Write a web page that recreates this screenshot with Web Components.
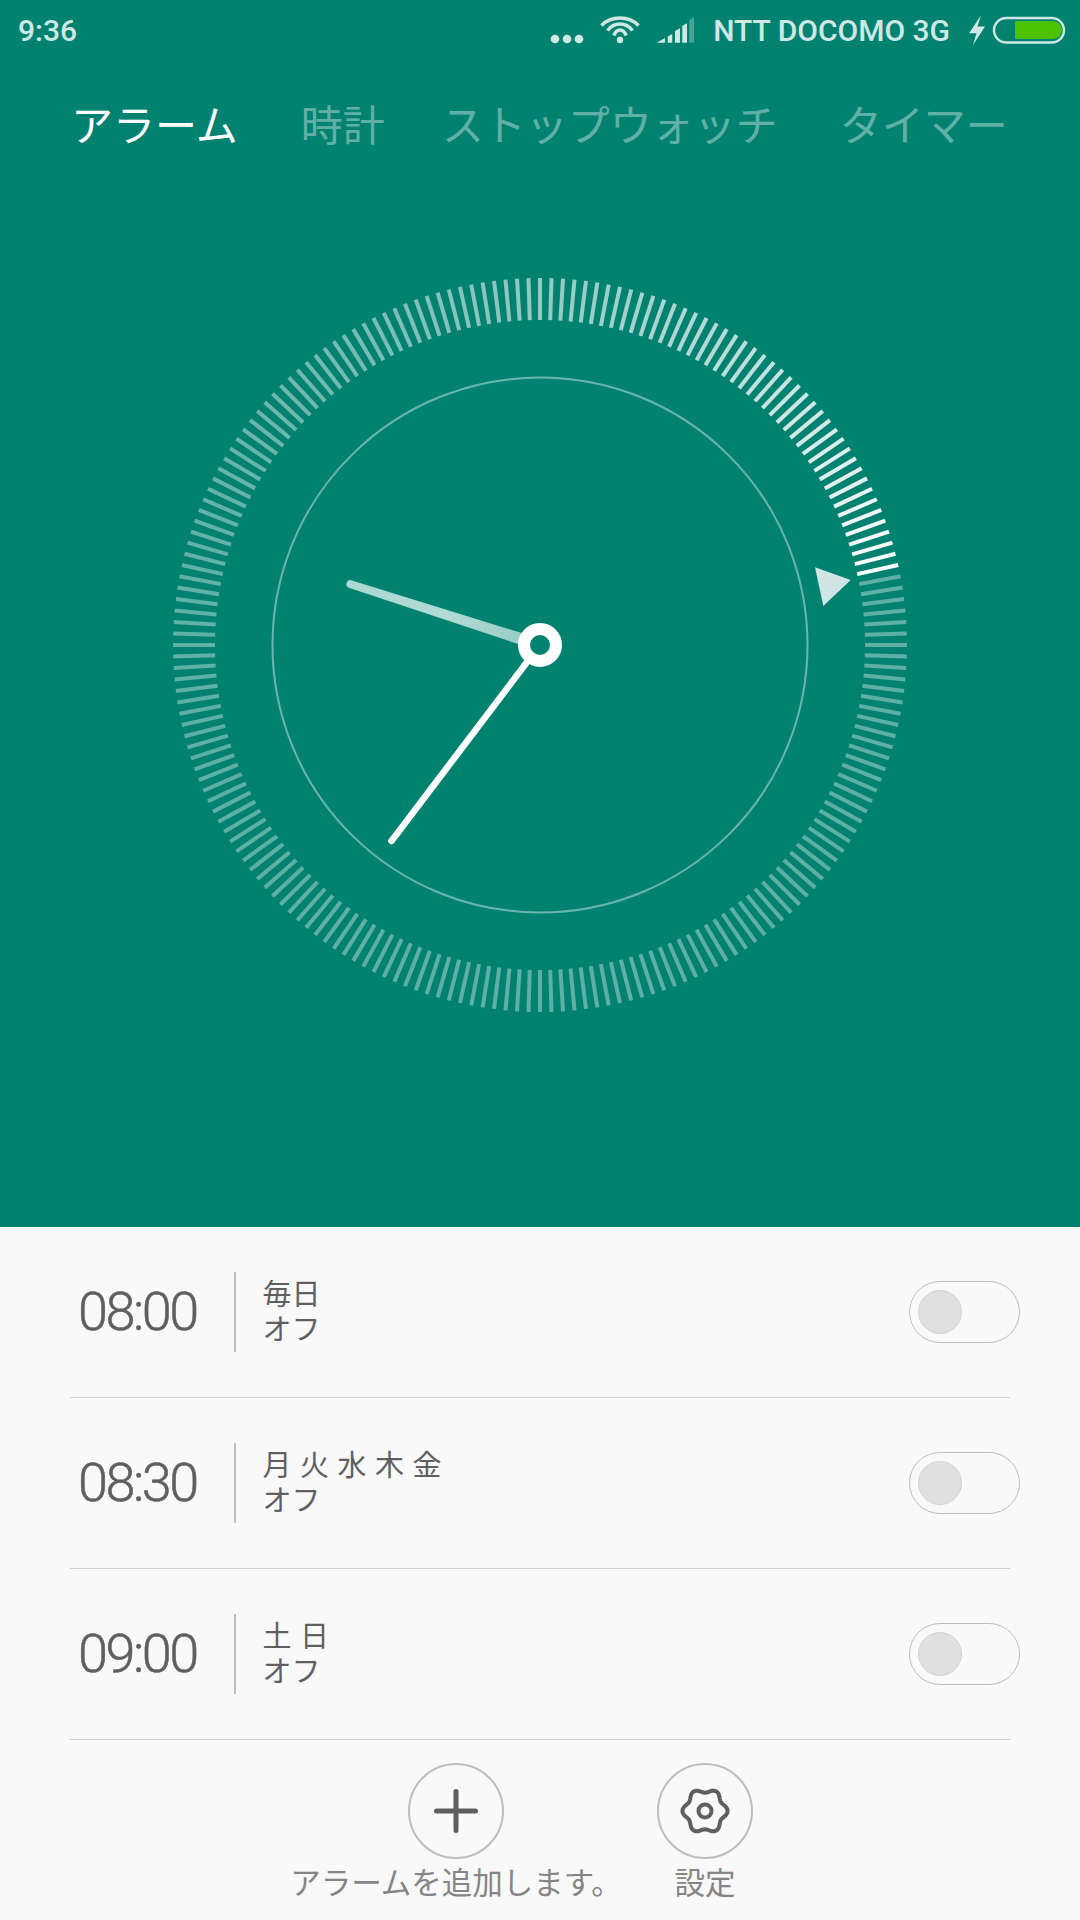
<!DOCTYPE html>
<html lang="ja">
<head>
<meta charset="utf-8">
<title>アラーム</title>
<style>
    html, body {
        margin: 0;
        padding: 0;
        background: #f9f9f9;
    }
    body {
        width: 1080px;
        height: 1920px;
        overflow: hidden;
        font-family: "Noto Sans CJK JP", "Roboto", sans-serif;
    }
</style>
</head>
<body>
<clock-app>
    <status-bar slot="status" time="9:36" carrier="NTT DOCOMO 3G"></status-bar>
    <tab-item slot="tabs" active>アラーム</tab-item>
    <tab-item slot="tabs" style="margin-left:63px">時計</tab-item>
    <tab-item slot="tabs" style="margin-left:57px">ストップウォッチ</tab-item>
    <tab-item slot="tabs" style="margin-left:62px">タイマー</tab-item>
    <clock-dial slot="dial"></clock-dial>

    <alarm-row slot="list" time="08:00" days="毎日" state="オフ"></alarm-row>
    <alarm-row slot="list" time="08:30" days="月 火 水 木 金" state="オフ"></alarm-row>
    <alarm-row slot="list" time="09:00" days="土 日" state="オフ"></alarm-row>

    <action-button slot="actions" icon="plus">アラームを追加します。</action-button>
    <action-button slot="actions" icon="gear">設定</action-button>
</clock-app>

<script>
class ClockApp extends HTMLElement {
    constructor() {
        super();
        this.attachShadow({ mode: "open" });
        this.shadowRoot.innerHTML = `
            <style>
                :host {
                    display: flex;
                    flex-direction: column;
                    width: 1080px;
                    height: 1920px;
                }
                .top {
                    height: 1227px;
                    background: #018271;
                    display: flex;
                    flex-direction: column;
                }
                .tabs {
                    display: flex;
                    padding: 35px 0 0 71px;
                }
                .dial {
                    display: flex;
                    justify-content: center;
                    margin-top: 114px;
                }
                .list {
                    display: flex;
                    flex-direction: column;
                }
                .actions {
                    display: flex;
                    justify-content: center;
                    align-items: flex-start;
                    padding: 23px 0 0 81px;
                }
            </style>
            <div class="top">
                <slot name="status"></slot>
                <div class="tabs"><slot name="tabs"></slot></div>
                <div class="dial"><slot name="dial"></slot></div>
            </div>
            <div class="list"><slot name="list"></slot></div>
            <div class="actions"><slot name="actions"></slot></div>
        `;
    }
}

class StatusBar extends HTMLElement {
    constructor() {
        super();
        this.attachShadow({ mode: "open" });
        this.shadowRoot.innerHTML = `
            <style>
                :host {
                    display: flex;
                    align-items: center;
                    height: 60px;
                    padding-left: 18px;
                    color: #d0e8e4;
                    font: 500 30px "Roboto", sans-serif;
                }
                .time { flex: 1; }
                .carrier { margin-left: 13px; white-space: nowrap; }
                svg { display: block; flex: none; }
                .power { margin-left: 10px; }
            </style>
            <span class="time"></span>
            <svg width="150" height="60" viewBox="550 0 150 60" fill="#d0e8e4">
                <circle cx="555" cy="39" r="4.300"/>
                <circle cx="567" cy="39" r="4.300"/>
                <circle cx="579" cy="39" r="4.300"/>
                <g fill="none" stroke="#d0e8e4" stroke-width="3.400">
                    <path d="M601.500 25.500C611 15.500 629 15.500 638.500 25.500"/>
                    <path d="M607.500 30.500C614 21.800 626 21.800 632.500 30.500"/>
                    <path d="M613.800 35.500C617 28.200 623 28.200 626.200 35.500"/>
                </g>
                <circle cx="620" cy="40" r="3.200"/>
                <path d="M656.700 42.700l8.300-4.700v4.700z"/>
                <path d="M667.700 36.500l4.500-2.500v8.700h-4.500z"/>
                <path d="M675 31l5-2.700v14.400h-5z"/>
                <path d="M682.300 26l4.700-2.700v19.400h-4.700z"/>
                <path d="M689.300 20l4.700-2.700v25.400h-4.700z" opacity=".35"/>
            </svg>
            <span class="carrier"></span>
            <svg class="power" width="120" height="60" viewBox="960 0 120 60">
                <path d="M981 15.300L969 33.300H976.500L973 45L985 26.500H977.500z" fill="#d0e8e4"/>
                <rect x="994" y="18" width="70" height="24.500" rx="12.250" fill="none" stroke="#d0e8e4" stroke-width="2.400"/>
                <path d="M1015 21h38a9 9 0 0 1 0 18h-38z" fill="#4cc200"/>
            </svg>
        `;
    }

    connectedCallback() {
        this.shadowRoot.querySelector(".time").textContent = this.getAttribute("time");
        this.shadowRoot.querySelector(".carrier").textContent = this.getAttribute("carrier");
    }
}

class TabItem extends HTMLElement {
    constructor() {
        super();
        this.attachShadow({ mode: "open" });
        this.shadowRoot.innerHTML = `
            <style>
                :host {
                    display: block;
                    color: rgba(255, 255, 255, .4);
                    font: 400 42px/56px "Noto Sans CJK JP", sans-serif;
                    white-space: nowrap;
                }
                :host([active]) { color: #fff; }
            </style>
            <slot></slot>
        `;
    }
}

class ClockDial extends HTMLElement {
    constructor() {
        super();
        this.attachShadow({ mode: "open" });

        // 200 ticks, the bright end sits at tick 43 and fades back round the ring
        let ticks = "";
        for (let i = 0; i < 200; i++) {
            let back = (43 - i + 200) % 200;
            let fade = Math.max(0, 1 - back / 100);
            let alpha = 0.37 + 0.63 * fade * fade;
            ticks += `<line x1="0" y1="-325" x2="0" y2="-367" stroke-opacity="${alpha.toFixed(3)}" transform="rotate(${(i * 1.8).toFixed(1)})"/>`;
        }

        this.shadowRoot.innerHTML = `
            <style>
                :host {
                    display: block;
                    width: 760px;
                    height: 760px;
                }
                svg { display: block; }
            </style>
            <svg width="760" height="760" viewBox="-380 -380 760 760">
                <defs>
                    <linearGradient id="hour" gradientUnits="userSpaceOnUse" x1="0" y1="0" x2="-190" y2="-61">
                        <stop offset=".1" stop-color="#98cdc4"/>
                        <stop offset=".5" stop-color="#b2dbd5"/>
                        <stop offset="1" stop-color="#acd8d1"/>
                    </linearGradient>
                </defs>
                <g stroke="#fff" stroke-width="4">${ticks}</g>
                <circle r="267.500" fill="none" stroke="#fff" stroke-opacity=".42" stroke-width="2"/>
                <path d="M275 -77.700L310.700 -65L283.300 -39z" fill="#cfe6e2"/>
                <path d="M1.840 -5.700L-188.800 -64.800A4 4 0 0 0 -191.200 -57.200L-1.840 5.700z" fill="url(#hour)"/>
                <line x1="0" y1="0" x2="-148.500" y2="196" stroke="#fff" stroke-width="6.500" stroke-linecap="round"/>
                <circle r="16" fill="#018271" stroke="#fff" stroke-width="12"/>
            </svg>
        `;
    }
}

class AlarmRow extends HTMLElement {
    constructor() {
        super();
        this.attachShadow({ mode: "open" });
        this.shadowRoot.innerHTML = `
            <style>
                :host {
                    display: flex;
                    align-items: center;
                    height: 170px;
                    margin-left: 70px;
                    width: 940px;
                    border-bottom: 1.500px solid #cfcfcf;
                    color: #5f5f5f;
                }
                .time {
                    width: 164px;
                    padding: 0 0 2px 8px;
                    box-sizing: border-box;
                    font: 300 54px "Roboto", sans-serif;
                    -webkit-text-stroke: .5px #5f5f5f;
                    letter-spacing: -2.500px;
                }
                .sep {
                    width: 1.500px;
                    height: 80px;
                    background: #bdbdbd;
                }
                .text {
                    flex: 1;
                    padding: 0 0 4px 27px;
                    font: 400 29px/35px "Noto Sans CJK JP", sans-serif;
                    word-spacing: 2px;
                }
                .switch {
                    box-sizing: border-box;
                    width: 111px;
                    height: 62px;
                    margin-right: -10px;
                    padding: 8px;
                    border: 1.500px solid #bdbdbd;
                    border-radius: 31px;
                }
                .knob {
                    width: 44px;
                    height: 44px;
                    box-sizing: border-box;
                    border-radius: 50%;
                    background: #e0e0e0;
                    border: 1px solid #d2d2d2;
                }
            </style>
            <div class="time"></div>
            <div class="sep"></div>
            <div class="text"><div class="days"></div><div class="state"></div></div>
            <div class="switch"><div class="knob"></div></div>
        `;
    }

    connectedCallback() {
        this.shadowRoot.querySelector(".time").textContent = this.getAttribute("time");
        this.shadowRoot.querySelector(".days").textContent = this.getAttribute("days");
        this.shadowRoot.querySelector(".state").textContent = this.getAttribute("state");
    }
}

class ActionButton extends HTMLElement {
    constructor() {
        super();
        this.attachShadow({ mode: "open" });

        // gear outline: six soft lobes round the hub
        let d = "";
        for (let a = 0; a < 360; a += 5) {
            let t = a * Math.PI / 180;
            let r = 20.4 + 2.2 * Math.cos(6 * t);
            d += (a ? "L" : "M") + (r * Math.cos(t)).toFixed(2) + " " + (r * Math.sin(t)).toFixed(2);
        }
        const icons = {
            plus: `<path d="M0 -19.500V19.500M-19.500 0H19.500" stroke="#5f5f5f" stroke-width="5" stroke-linecap="round" fill="none"/>`,
            gear: `<path d="${d}z" stroke="#5f5f5f" stroke-width="4" stroke-linejoin="round" fill="none"/>
                   <circle r="6.500" stroke="#5f5f5f" stroke-width="4" fill="none"/>`
        };

        this.shadowRoot.innerHTML = `
            <style>
                :host {
                    display: flex;
                    flex-direction: column;
                    align-items: center;
                    gap: 2px;
                    color: #858585;
                    font: 400 30.500px/40px "Noto Sans CJK JP", sans-serif;
                    white-space: nowrap;
                    width: 249px;
                }
                .ring {
                    box-sizing: border-box;
                    width: 96px;
                    height: 96px;
                    border-radius: 50%;
                    border: 2px solid #bdbdbd;
                    display: flex;
                    align-items: center;
                    justify-content: center;
                }
                svg { display: block; }
            </style>
            <div class="ring">
                <svg width="60" height="60" viewBox="-30 -30 60 60">${icons[this.getAttribute("icon")]}</svg>
            </div>
            <slot></slot>
        `;
    }
}

customElements.define("clock-app", ClockApp);
customElements.define("status-bar", StatusBar);
customElements.define("tab-item", TabItem);
customElements.define("clock-dial", ClockDial);
customElements.define("alarm-row", AlarmRow);
customElements.define("action-button", ActionButton);
</script>
</body>
</html>
